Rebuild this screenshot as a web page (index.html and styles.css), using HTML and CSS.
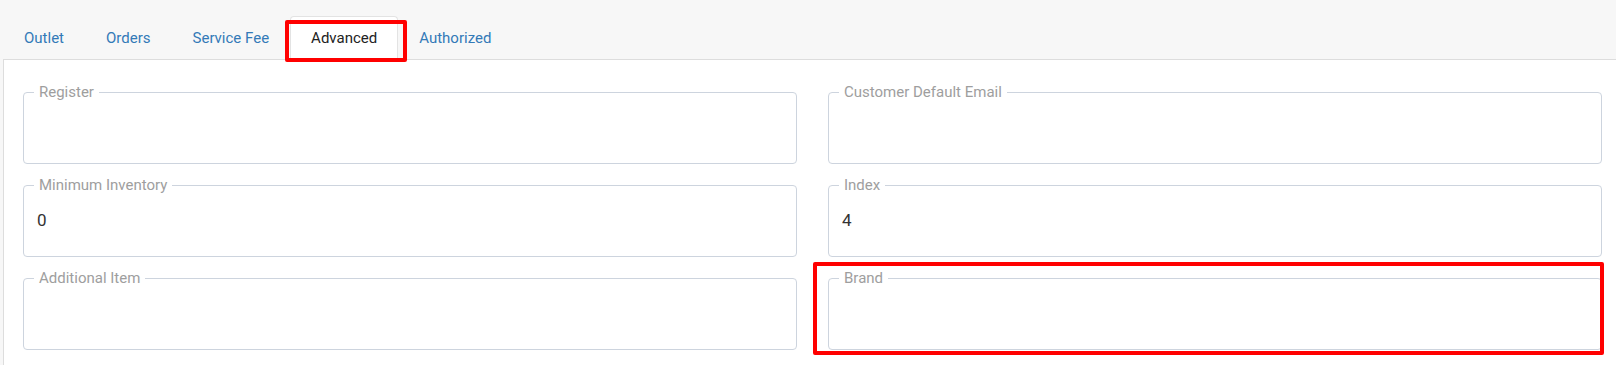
FILE: index.html
```html
<!DOCTYPE html>
<html>
	<head>
		<meta charset="UTF-8">
		<title>Advanced</title>
		<link rel="stylesheet" href="styles.css">
	</head>
	<body>
		<ul class="tabs">
			<li class="tab"><a href="javascript:;">Outlet</a></li>
			<li class="tab"><a href="javascript:;">Orders</a></li>
			<li class="tab"><a href="javascript:;">Service Fee</a></li>
			<li class="tab active"><a href="javascript:;">Advanced</a><span class="mark mark-tab"></span></li>
			<li class="tab"><a href="javascript:;">Authorized</a></li>
		</ul>
		<div class="panel">
			<div class="grid">
				<div class="field">
					<fieldset>
						<legend>Register</legend>
						<input class="val" type="text" value="">
					</fieldset>
				</div>
				<div class="field">
					<fieldset>
						<legend>Customer Default Email</legend>
						<input class="val" type="text" value="">
					</fieldset>
				</div>
				<div class="field">
					<fieldset>
						<legend>Minimum Inventory</legend>
						<input class="val" type="text" value="0">
					</fieldset>
				</div>
				<div class="field">
					<fieldset>
						<legend>Index</legend>
						<input class="val" type="text" value="4">
					</fieldset>
				</div>
				<div class="field">
					<fieldset>
						<legend>Additional Item</legend>
						<input class="val" type="text" value="">
					</fieldset>
				</div>
				<div class="field">
					<fieldset>
						<legend>Brand</legend>
						<input class="val" type="text" value="">
					</fieldset>
					<span class="mark mark-field"></span>
				</div>
			</div>
		</div>
	</body>
</html>
```

FILE: styles.css
```css
html, body{
	margin: 0;
	padding: 0;
}
body{
	background-color: #f7f7f7;
	font-family: Roboto, "Liberation Sans", Arial, sans-serif;
	font-size: 15px;
	overflow: hidden;
}
.tabs{
	display: flex;
	list-style: none;
	margin: 0;
	padding: 16px 0 0 3px;
}
.tab{
	position: relative;
	margin-bottom: -1px;
	border: 1px solid transparent;
	border-radius: 4px 4px 0 0;
}
.tab a{
	display: block;
	padding: 11px 20px;
	line-height: 20px;
	color: #337ab7;
	text-decoration: none;
}
.tab.active{
	background-color: #fff;
	border-color: #e3e3e3;
	border-bottom-color: #fff;
}
.tab.active a{
	color: #222;
}
.panel{
	margin-left: 3px;
	background-color: #fff;
	border-top: 1px solid #ddd;
	border-left: 1px solid #ddd;
	padding: 22px 0 20px 19px;
}
.grid{
	display: grid;
	grid-template-columns: 774px 774px;
	column-gap: 31px;
	row-gap: 11px;
}
.field{
	position: relative;
}
fieldset{
	margin: 0;
	padding: 0 10px 19px;
	border: 1px solid #cdd4de;
	border-radius: 4px;
}
legend{
	padding: 0 5px;
	line-height: 20px;
	font-size: 15px;
	color: #9e9e9e;
}
.val{
	display: block;
	box-sizing: border-box;
	width: 100%;
	height: 34px;
	margin-top: 8px;
	padding: 0 3px;
	border: none;
	outline: none;
	background: transparent;
	font-family: Roboto, "Liberation Sans", Arial, sans-serif;
	font-size: 17px;
	color: #333;
}
.mark{
	position: absolute;
	box-sizing: border-box;
	border: 4px solid #ff0000;
	border-radius: 2px;
}
.mark-tab{
	left: -6px;
	right: -10px;
	top: 3px;
	height: 42px;
}
.mark-field{
	left: -15px;
	top: -6px;
	width: 791px;
	height: 93px;
}
```
